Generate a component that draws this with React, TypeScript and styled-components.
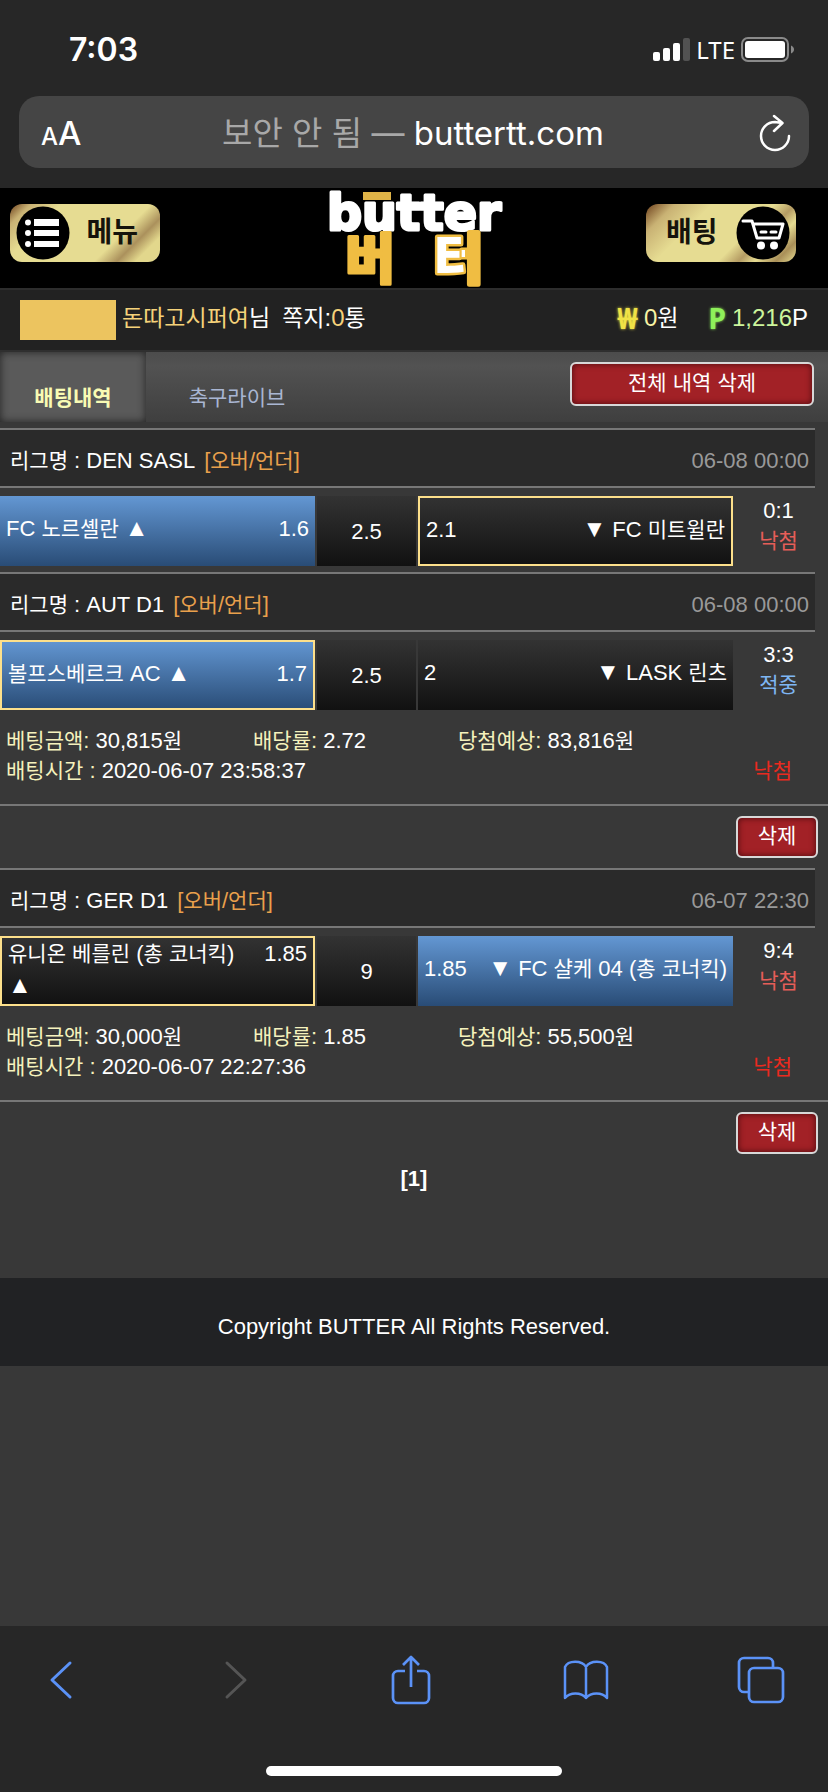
import React from "react";
import styled, { createGlobalStyle } from "styled-components";

const GlobalStyle = createGlobalStyle`
  *, *::before, *::after { box-sizing: border-box; }
  body {
    margin: 0;
    background: #383838;
    color: #fff;
    font-family: "Liberation Sans", "Noto Sans CJK KR", sans-serif;
    font-size: 22px;
    line-height: 32px;
  }
  button { margin: 0; padding: 0; border: 0; background: none; color: inherit; font: inherit; }
  a { color: inherit; text-decoration: none; }
  svg { display: block; flex: none; overflow: visible; }
`;

const ui = `Inter, "Noto Sans CJK KR", sans-serif`;

const Page = styled.div`
  min-height: 100vh;
  display: flex;
  flex-direction: column;
`;

/* ---------- browser chrome ---------- */

const TopChrome = styled.header`
  background: #272727;
  font-family: ${ui};
`;

const StatusBar = styled.div`
  height: 96px;
  padding: 4px 33px 0 69px;
  display: flex;
  align-items: center;
  justify-content: space-between;
`;

const Clock = styled.time`
  font-size: 32px;
  font-weight: 600;
`;

const Signals = styled.div`
  display: flex;
  align-items: center;
  gap: 6px;
  font-family: "Noto Sans", sans-serif;
  font-size: 24px;
`;

const AddressBar = styled.div`
  height: 72px;
  margin: 0 19px 20px;
  padding: 2px 18px 0 22px;
  border-radius: 20px;
  background: #454545;
  display: grid;
  grid-template-columns: 54px 1fr 60px;
  align-items: center;
`;

const TextSizeButton = styled.button`
  padding-top: 4px;
  text-align: left;
  font-size: 33px;
  font-weight: 500;
  small { font-size: 24px; }
`;

const Address = styled.div`
  text-align: center;
  font-size: 33px;
  white-space: nowrap;
`;

const Insecure = styled.span`
  color: #a8a8a8;
`;

const ReloadButton = styled.button`
  justify-self: end;
`;

const BottomChrome = styled.footer`
  height: 166px;
  padding-top: 24px;
  background: #272727;
  display: flex;
  flex-direction: column;
  justify-content: space-between;
`;

const Toolbar = styled.nav`
  padding: 0 39px 0 33px;
  display: flex;
  justify-content: space-between;
`;

const ToolButton = styled.button<{ $off?: boolean }>`
  width: 56px;
  height: 60px;
  display: grid;
  place-items: center;
  color: ${(p) => (p.$off ? "#555" : "#5b92f7")};
`;

const HomeBar = styled.div`
  width: 296px;
  height: 10px;
  margin: 0 auto 16px;
  border-radius: 5px;
  background: #fff;
`;

/* ---------- site header ---------- */

const SiteHeader = styled.div`
  height: 100px;
  padding: 0 32px 0 10px;
  background: #000;
  display: grid;
  grid-template-columns: 1fr auto 1fr;
  align-items: start;
`;

const GoldButton = styled.button<{ $end?: boolean }>`
  width: 150px;
  height: 58px;
  margin-top: 16px;
  padding: 0 ${(p) => (p.$end ? "6px 0 20px" : "22px 0 6px")};
  justify-self: ${(p) => (p.$end ? "end" : "start")};
  border-radius: 12px;
  background: ${(p) =>
    p.$end
      ? "linear-gradient(135deg, #6d401c 0, #c9b274 14%, #e6dc92 32%, #e6dc92 62%, #b59c63 72%, #e6dc92 80%, #a98f58 90%, #e6dc92 100%)"
      : "linear-gradient(135deg, #6d401c 0, #c9b274 10%, #e6dc92 25%, #e6dc92 68%, #ab915c 79%, #e2d78c 88%)"};
  display: flex;
  align-items: center;
  justify-content: space-between;
  color: #15130c;
  font-size: 28px;
  font-weight: 700;
`;

const LogoLink = styled.a`
  margin: 4px 0 0 22px;
`;

const UserBar = styled.div`
  height: 64px;
  padding: 0 20px;
  border-top: 2px solid #2d2d2d;
  border-bottom: 2px solid #2f2f2f;
  background: #222;
  display: flex;
  align-items: center;
  font-size: 24px;
`;

const Badge = styled.span`
  width: 96px;
  height: 40px;
  margin-right: 6px;
  background: #ecc45f;
`;

const UserText = styled.span`
  padding-bottom: 4px;
  margin-right: 12px;
`;

const Balance = styled(UserText)<{ $push?: boolean }>`
  display: flex;
  align-items: center;
  gap: 6px;
  margin: 0 0 0 ${(p) => (p.$push ? "auto" : "30px")};
`;

const Coin = styled.b<{ $c: string }>`
  color: ${(p) => p.$c};
  font-family: "Noto Sans", "Noto Sans CJK KR", sans-serif;
  font-size: 28px;
  text-shadow: 0 0 3px ${(p) => p.$c};
`;

const Tint = styled.span<{ $c: string }>`
  color: ${(p) => p.$c};
`;

const Hangul = styled.span`
  font-family: "Noto Sans CJK KR", sans-serif;
  font-size: 21px;
  line-height: 1;
  ${UserBar} & { font-size: 23px; }
`;

const Arrow = styled.span`
  font-size: 24px;
  line-height: 1;
`;

/* ---------- tabs ---------- */

const TabBar = styled.nav`
  height: 70px;
  padding-right: 14px;
  background: linear-gradient(#4c4c4c, #525252 20%, #3f3f3f);
  display: flex;
`;

const Tab = styled.a<{ $active?: boolean }>`
  width: ${(p) => (p.$active ? 146 : 182)}px;
  padding-top: 18px;
  display: grid;
  place-items: center;
  color: ${(p) => (p.$active ? "#f8fbb4" : "#a9b6d3")};
  font-weight: ${(p) => (p.$active ? 700 : 400)};
  ${(p) => p.$active && "background: #5a5a5a; box-shadow: inset 0 0 8px #222;"}
`;

const RedButton = styled.button<{ $wide?: boolean }>`
  width: ${(p) => (p.$wide ? 244 : 82)}px;
  height: ${(p) => (p.$wide ? 44 : 42)}px;
  padding-bottom: 2px;
  border: 2px solid #d8d8d8;
  border-radius: 6px;
  background: #a22126;
  box-shadow: inset 0 0 6px #4a0a0e;
  ${(p) => p.$wide && "margin: 10px 0 0 auto;"}
`;

/* ---------- bets ---------- */

const Main = styled.main`
  flex: 1;
  padding-top: 6px;
`;

const LeagueRow = styled.div`
  height: 60px;
  margin-right: 13px;
  padding: 5px 6px 0 10px;
  border: solid #777;
  border-width: 2px 0;
  background: #2a2a2a;
  display: flex;
  align-items: center;
  justify-content: space-between;
`;

const Market = styled.span`
  margin-left: 9px;
  color: #e9a04c;
`;

const MatchRow = styled.div`
  margin: 8px 0 6px;
  display: grid;
  grid-template-columns: 315fr 99fr 315fr 93fr;
  column-gap: 2px;
`;

const darkFill = "linear-gradient(#333, #111)";
const blueFill = "linear-gradient(#6397d3, #294c76)";

const Side = styled.div<{ $won?: boolean; $picked?: boolean }>`
  height: 70px;
  padding: 0 6px ${(p) => (p.$picked ? 2 : 4)}px;
  background: ${(p) => (p.$won ? blueFill : darkFill)};
  background-origin: border-box;
  border: ${(p) => (p.$picked ? "2px solid #fde08b" : "0")};
  display: flex;
  align-items: center;
`;

const SideLine = styled.div`
  flex: 1;
  display: flex;
  justify-content: space-between;
  gap: 12px;
`;

const Handicap = styled.div`
  height: 70px;
  padding-top: 2px;
  background: ${darkFill};
  display: grid;
  place-items: center;
`;

const Result = styled.div`
  padding-right: 6px;
  display: flex;
  flex-direction: column;
  align-items: center;
  line-height: 30px;
`;

const Summary = styled.div`
  margin-top: 16px;
  padding: 0 6px 18px;
  border-bottom: 2px solid #777;
  line-height: 30px;
`;

const SummaryLine = styled.div`
  display: grid;
  grid-template-columns: 247fr 205fr 364fr;
`;

const TimeLine = styled.div`
  padding-right: 30px;
  display: flex;
  justify-content: space-between;
`;

const Actions = styled.div`
  padding: 10px;
  display: flex;
  justify-content: flex-end;
`;

const Pager = styled.nav`
  padding: 0 0 84px;
  text-align: center;
  line-height: 30px;
`;

const Copyright = styled.div`
  height: 88px;
  padding-top: 10px;
  background: #212224;
  display: grid;
  place-items: center;
`;

/** Sets Korean runs a step smaller and arrows a step larger than the Latin text. */
function T({ children }: { children: string }) {
  return (
    <>
      {children.split(/([가-힣]+|[▲▼])/).map((part, i) => {
        if (i % 2 === 0) return part;
        return /[▲▼]/.test(part) ? <Arrow key={i}>{part}</Arrow> : <Hangul key={i}>{part}</Hangul>;
      })}
    </>
  );
}

type Match = {
  league: string;
  time: string;
  home: string;
  homeOdds: string;
  line: string;
  away: string;
  awayOdds: string;
  won: "home" | "away";
  picked: "home" | "away";
  score: string;
  hit: boolean;
};

type Slip = { matches: Match[]; stake: string; odds: string; payout: string; placed: string };

const slips: Slip[] = [
  {
    matches: [
      { league: "DEN SASL", time: "06-08 00:00", home: "FC 노르셸란", homeOdds: "1.6", line: "2.5", away: "FC 미트윌란", awayOdds: "2.1", won: "home", picked: "away", score: "0:1", hit: false },
      { league: "AUT D1", time: "06-08 00:00", home: "볼프스베르크 AC", homeOdds: "1.7", line: "2.5", away: "LASK 린츠", awayOdds: "2", won: "home", picked: "home", score: "3:3", hit: true },
    ],
    stake: "30,815원",
    odds: "2.72",
    payout: "83,816원",
    placed: "2020-06-07 23:58:37",
  },
  {
    matches: [
      { league: "GER D1", time: "06-07 22:30", home: "유니온 베를린 (총 코너킥)", homeOdds: "1.85", line: "9", away: "FC 샬케 04 (총 코너킥)", awayOdds: "1.85", won: "away", picked: "home", score: "9:4", hit: false },
    ],
    stake: "30,000원",
    odds: "1.85",
    payout: "55,500원",
    placed: "2020-06-07 22:27:36",
  },
];

const cream = "#f5f2bd";

function Field({ label, value }: { label: string; value: string }) {
  return (
    <span>
      <Tint $c={cream}><T>{label}</T></Tint> <T>{value}</T>
    </span>
  );
}

function MatchBlock({ m }: { m: Match }) {
  return (
    <section>
      <LeagueRow>
        <span>
          <T>{`리그명 : ${m.league}`}</T>
          <Market><T>[오버/언더]</T></Market>
        </span>
        <Tint $c="#999">{m.time}</Tint>
      </LeagueRow>
      <MatchRow>
        <Side $won={m.won === "home"} $picked={m.picked === "home"}>
          <SideLine>
            <span><T>{`${m.home} ▲`}</T></span>
            <span>{m.homeOdds}</span>
          </SideLine>
        </Side>
        <Handicap>{m.line}</Handicap>
        <Side $won={m.won === "away"} $picked={m.picked === "away"}>
          <SideLine>
            <span>{m.awayOdds}</span>
            <span><T>{`▼ ${m.away}`}</T></span>
          </SideLine>
        </Side>
        <Result>
          <span>{m.score}</span>
          <Tint $c={m.hit ? "#7fb6f3" : "#e65e58"}><T>{m.hit ? "적중" : "낙첨"}</T></Tint>
        </Result>
      </MatchRow>
    </section>
  );
}

function Logo() {
  return (
    <svg width="180" height="94" viewBox="0 0 180 94" role="img" aria-label="butter 버터">
      <defs>
        <linearGradient id="cream">
          <stop offset="0.640" stopColor="#fff" />
          <stop offset="0.640" stopColor="#f0bd42" />
        </linearGradient>
      </defs>
      <text x="90" y="38" textAnchor="middle" fontFamily="'DejaVu Sans', sans-serif" fontWeight="700" fontSize="49" fill="#fff" stroke="#fff" strokeWidth="3" strokeLinejoin="round">butter</text>
      <rect x="39" y="0" width="28" height="8" fill="#dfb347" />
      <g fontFamily="'Noto Sans CJK KR', sans-serif" fontWeight="900" fontSize="54" textAnchor="middle" strokeLinejoin="round">
        <text x="46" y="87" fill="#f0bd42" stroke="#f0bd42" strokeWidth="3">버</text>
        <text x="134" y="87" fill="url(#cream)" stroke="#f0bd42" strokeWidth="5" paintOrder="stroke">터</text>
      </g>
    </svg>
  );
}

export default function App() {
  return (
    <Page>
      <GlobalStyle />
      <TopChrome>
        <StatusBar>
          <Clock>7:03</Clock>
          <Signals>
            <svg width="37" height="24" viewBox="0 0 37 24" fill="#fff">
              <rect y="14" width="7" height="9" rx="2" />
              <rect x="10" y="10" width="7" height="13" rx="2" />
              <rect x="20" y="5" width="7" height="18" rx="2" />
              <rect x="30" width="7" height="23" rx="2" fill="#525252" />
            </svg>
            LTE
            <svg width="54" height="26" viewBox="0 0 54 26">
              <rect x="1" y="1" width="46" height="23" rx="6" fill="none" stroke="#8a8a8a" strokeWidth="2" />
              <rect x="4" y="4" width="40" height="17" rx="3" fill="#fff" />
              <path d="M50 8.500c4 1.500 4 6.500 0 8z" fill="#8a8a8a" />
            </svg>
          </Signals>
        </StatusBar>
        <AddressBar>
          <TextSizeButton aria-label="Text size"><small>A</small>A</TextSizeButton>
          <Address><Insecure>보안 안 됨 —</Insecure> buttertt.com</Address>
          <ReloadButton aria-label="Reload">
            <svg width="32" height="38" viewBox="0 0 32 38" fill="none" stroke="#fff" strokeWidth="2.500" strokeLinecap="round" strokeLinejoin="round">
              <path d="M30 22a14 14 0 1 1-14-14l7 1M15 2l8.500 7-8.500 8" />
            </svg>
          </ReloadButton>
        </AddressBar>
      </TopChrome>

      <SiteHeader>
        <GoldButton>
          <svg width="54" height="54" viewBox="0 0 54 54">
            <circle cx="27" cy="27" r="26.500" fill="#000" />
            <g fill="#fff">
              <circle cx="12" cy="16.500" r="3" /><circle cx="12" cy="27" r="3" /><circle cx="12" cy="38" r="3" />
              <rect x="18" y="13" width="25" height="7" /><rect x="18" y="24" width="25" height="6" /><rect x="18" y="35" width="25" height="6" />
            </g>
          </svg>
          메뉴
        </GoldButton>
        <LogoLink href="#"><Logo /></LogoLink>
        <GoldButton $end>
          배팅
          <svg width="54" height="54" viewBox="0 0 54 54">
            <circle cx="27" cy="27" r="26.500" fill="#000" />
            <g fill="none" stroke="#fff" strokeWidth="3" strokeLinejoin="round" strokeLinecap="round">
              <path d="M7 15h9l5 17h22l4-14H18" />
              <path d="M25 26h5M35 26h5" />
            </g>
            <circle cx="25" cy="39.500" r="4" fill="#fff" /><circle cx="38" cy="39.500" r="4" fill="#fff" />
          </svg>
        </GoldButton>
      </SiteHeader>

      <UserBar>
        <Badge />
        <UserText><Tint $c="#f5d27a"><T>돈따고시퍼여</T></Tint><T>님</T></UserText>
        <UserText><T>쪽지:</T><Tint $c="#f5d27a">0</Tint><T>통</T></UserText>
        <Balance $push>
          <Coin $c="#efe246">₩</Coin>
          <span><Tint $c="#f8f3a4">0</Tint><T>원</T></span>
        </Balance>
        <Balance>
          <Coin $c="#8ff05a">P</Coin>
          <span><Tint $c="#cdf59c">1,216</Tint>P</span>
        </Balance>
      </UserBar>

      <TabBar>
        <Tab href="#" $active><T>배팅내역</T></Tab>
        <Tab href="#"><T>축구라이브</T></Tab>
        <RedButton $wide><T>전체 내역 삭제</T></RedButton>
      </TabBar>

      <Main>
        {slips.map((s) => (
          <article key={s.placed}>
            {s.matches.map((m) => <MatchBlock key={m.league} m={m} />)}
            <Summary>
              <SummaryLine>
                <Field label="베팅금액:" value={s.stake} />
                <Field label="배당률:" value={s.odds} />
                <Field label="당첨예상:" value={s.payout} />
              </SummaryLine>
              <TimeLine>
                <Field label="배팅시간 :" value={s.placed} />
                <Tint $c="#ea2a1f"><T>낙첨</T></Tint>
              </TimeLine>
            </Summary>
            <Actions><RedButton><T>삭제</T></RedButton></Actions>
          </article>
        ))}
        <Pager><b>[1]</b></Pager>
        <Copyright>Copyright BUTTER All Rights Reserved.</Copyright>
      </Main>

      <BottomChrome>
        <Toolbar>
          <ToolButton aria-label="Back">
            <svg width="24" height="40" viewBox="0 0 24 40" fill="none" stroke="currentColor" strokeWidth="3" strokeLinecap="round" strokeLinejoin="round"><path d="M21 3 3 20l18 17" /></svg>
          </ToolButton>
          <ToolButton $off aria-label="Forward">
            <svg width="24" height="40" viewBox="0 0 24 40" fill="none" stroke="currentColor" strokeWidth="3" strokeLinecap="round" strokeLinejoin="round"><path d="m3 3 18 17L3 37" /></svg>
          </ToolButton>
          <ToolButton aria-label="Share">
            <svg width="40" height="52" viewBox="0 0 40 52" fill="none" stroke="currentColor" strokeWidth="2.700" strokeLinejoin="round">
              <path d="M14 17H7a5 5 0 0 0-5 5v22a5 5 0 0 0 5 5h26a5 5 0 0 0 5-5V22a5 5 0 0 0-5-5h-7M20 33V3M12 11l8-8 8 8" />
            </svg>
          </ToolButton>
          <ToolButton aria-label="Bookmarks">
            <svg width="46" height="42" viewBox="0 0 46 42" fill="none" stroke="currentColor" strokeWidth="2.500" strokeLinecap="round" strokeLinejoin="round">
              <path d="M23 8C19 1 5 1 2 8v31c5-6 16-6 21 0 5-6 16-6 21 0V8C41 1 27 1 23 8v31" />
            </svg>
          </ToolButton>
          <ToolButton aria-label="Tabs">
            <svg width="48" height="48" viewBox="0 0 48 48" fill="none" stroke="currentColor" strokeWidth="2.700" strokeLinejoin="round">
              <path d="M12 36H7a5 5 0 0 1-5-5V7a5 5 0 0 1 5-5h24a5 5 0 0 1 5 5v5" />
              <rect x="12" y="12" width="34" height="34" rx="5" />
            </svg>
          </ToolButton>
        </Toolbar>
        <HomeBar />
      </BottomChrome>
    </Page>
  );
}
